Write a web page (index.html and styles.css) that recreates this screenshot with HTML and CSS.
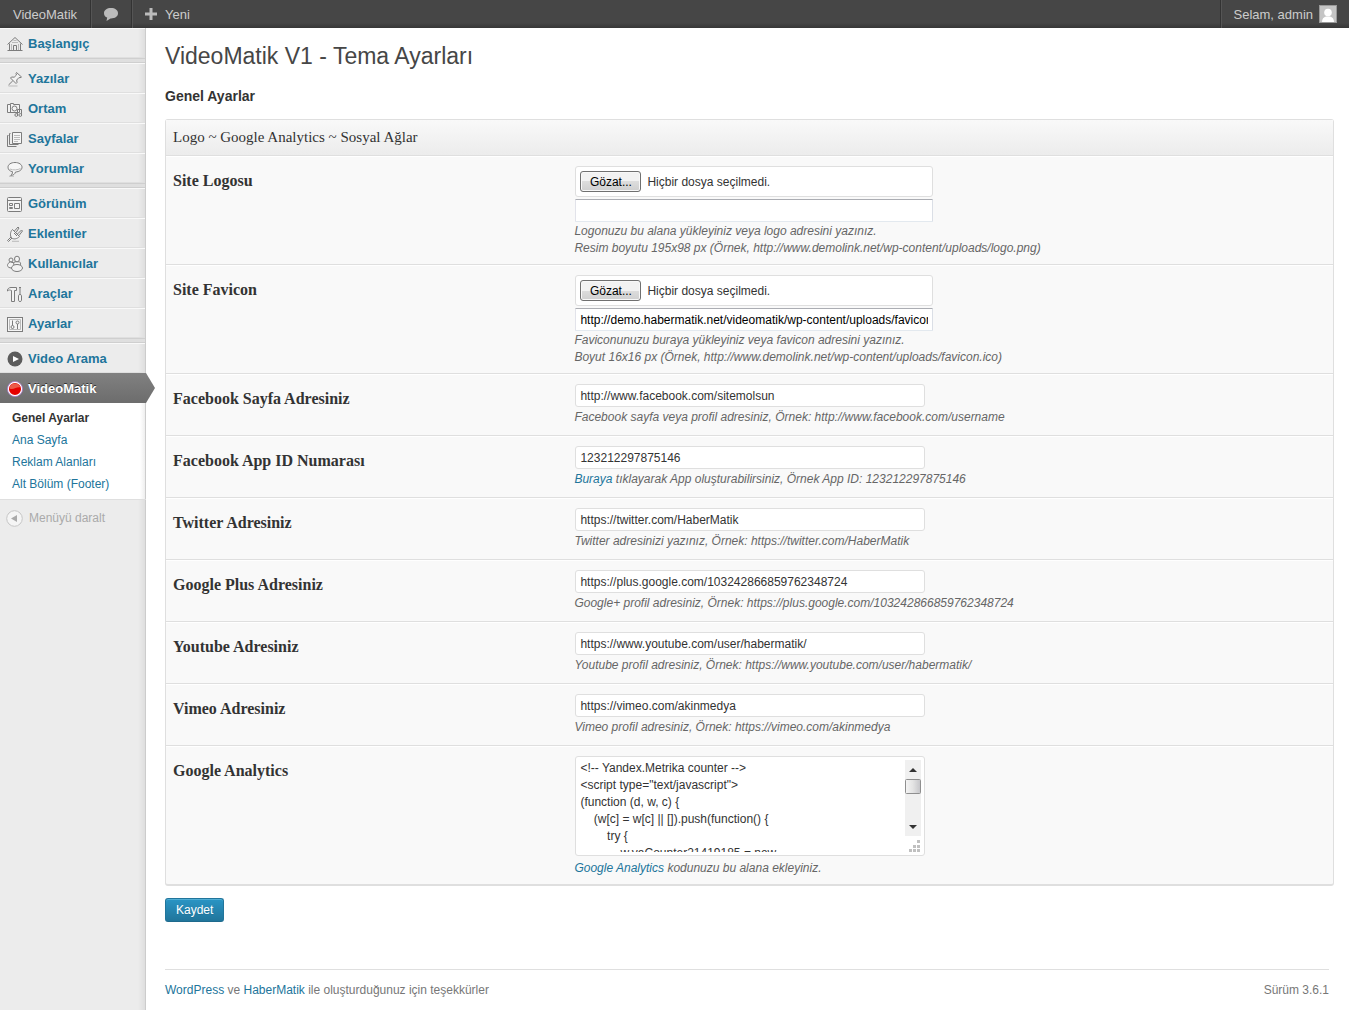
FILE: index.html
```
<!DOCTYPE html>
<html lang="tr">
<head>
  <meta charset="UTF-8">
  <title>VideoMatik V1 - Tema Ayarları</title>
  <link rel="stylesheet" href="styles.css">
</head>
<body>
  <div class="adminbar">
    <a class="bar-item" href="#">VideoMatik</a>
    <a class="bar-item bar-comments" href="#" aria-label="Yorumlar">
      <svg width="16" height="16" viewBox="0 0 16 16"><path d="M8 2C4 2 1 4 1 7.200c0 2 1.200 3.600 3.200 4.400L3.500 15l4-2.600H8c4 0 7-2 7-5.200S12 2 8 2z" fill="#bbb"/></svg>
    </a>
    <a class="bar-item bar-new" href="#">
      <svg width="12" height="12" viewBox="0 0 12 12"><path d="M4.500 0h3v4.500H12v3H7.500V12h-3V7.500H0v-3h4.500z" fill="#bbb"/></svg>
      Yeni
    </a>
    <a class="bar-item bar-user" href="#">
      Selam, admin
      <svg class="avatar" width="16" height="16" viewBox="0 0 16 16"><rect width="16" height="16" fill="#c5c5c5"/><circle cx="8" cy="6.500" r="3.800" fill="#fff"/><path d="M2 16c0-3 1.500-5 4-5.500h4c2.500.5 4 2.500 4 5.500z" fill="#fff"/></svg>
    </a>
  </div>

  <div class="page">
    <div class="sidebar">
      <ul class="menu">
        <li><a href="#">
          <svg class="icon" viewBox="0 0 16 16"><path class="soft" d="M4.500 8v6M11.500 8v6M5 6.500h6M6.500 4.500h3"/><path d="M.5 8.500l7.500-7 7.500 7M2.500 7.500v7M13.500 7.500v7M.5 14.500h15M6.500 14V9.500h3V14"/></svg>
          Başlangıç</a></li>
        <li class="separator"></li>
        <li><a href="#">
          <svg class="icon" viewBox="0 0 16 16"><path fill="#f3f3f3" d="M9.500 1.500l5 4.500-1.500.8-1-.3-2.300 2.500.3 2.500-1 1L3.500 7l1-1 2.700.2L9.500 4 9 2.500z"/><path d="M5.800 9.800L1.500 14"/><path class="soft" d="M1.500 15h9"/></svg>
          Yazılar</a></li>
        <li><a href="#">
          <svg class="icon" viewBox="0 0 16 16"><path fill="#f3f3f3" d="M.5 3.500h3v-1h3v1h6v8H.500zM3.500 3.500v8"/><circle cx="7.500" cy="7.500" r="2.500"/><path d="M10.500 13.500v-5h4v5"/><circle cx="9.300" cy="14" r="1.400" fill="#eee"/><circle cx="13.300" cy="14" r="1.400" fill="#eee"/></svg>
          Ortam</a></li>
        <li><a href="#">
          <svg class="icon" viewBox="0 0 16 16"><path d="M5.500 1.500h9v11h-9z" fill="#f6f6f6"/><path d="M3.500 2.500h-1v11h9M1.500 4.500h-1v11h9"/><path class="soft" d="M7 4.500h6M7 6.500h6M7 8.500h6M7 10.500h4"/></svg>
          Sayfalar</a></li>
        <li><a href="#">
          <svg class="icon" viewBox="0 0 16 16"><path fill="#f6f6f6" d="M8 1.500c-4 0-7 1.900-7 4.700 0 2.300 1.800 4 4.500 4.500 0 1.800-.5 3-2 4 2.700-.3 4.500-1.700 5-3.700 3.800-.2 6.500-2.100 6.500-4.800S12 1.500 8 1.500z"/><path class="soft" d="M3 8c3 1.500 8 1 10.500-.5M2 15.200h5"/></svg>
          Yorumlar</a></li>
        <li class="separator"></li>
        <li><a href="#">
          <svg class="icon" viewBox="0 0 16 16"><rect x=".5" y="1.500" width="14" height="14" rx="1" fill="#f3f3f3"/><path d="M1 4.500h13M7.500 7.500h5v5h-5zM2.500 7.500h3v2h-3zM2.500 11.500h3v1h-3z"/></svg>
          Görünüm</a></li>
        <li><a href="#">
          <svg class="icon" viewBox="0 0 16 16"><path fill="#f3f3f3" d="M5.500 3.500l7 7c-2.500 2.500-5.500 3-8 1.500-1.500-2.500-1.500-6 1-8.500z"/><path d="M7.500 5l3.500-4 1 1-3 4.500M10.500 8l4-4 1 1-3.500 4.500M4 11l-3.500 3.500 1 1L5 12M7 7l3 3"/><path class="soft" d="M5 15.300h7"/></svg>
          Eklentiler</a></li>
        <li><a href="#">
          <svg class="icon" viewBox="0 0 16 16"><g fill="#f3f3f3"><circle cx="4" cy="4" r="2"/><path d="M3.500 6C1.500 6.500.5 8 .5 9.500s2 2.500 4 2.500l3-2V7z"/><ellipse cx="10" cy="3" rx="2.500" ry="2.800"/><path d="M7.500 5.800c-1.500 2-1 3.200.500 3.700h4.500c1.500-.5 1.500-2.500 0-3.700z"/><ellipse cx="10" cy="12" rx="5.500" ry="3.500"/></g></svg>
          Kullanıcılar</a></li>
        <li><a href="#">
          <svg class="icon" viewBox="0 0 16 16"><path fill="#f3f3f3" d="M.5 4C1 2.500 2 1.500 4 1.500h5.500v3h-2v11h-3v-11C3 4 2 3.500.500 5zM11.500 9.500c0-1.300 3-1.300 3 0v5c0 1.300-3 1.300-3 0z"/><path d="M13 1v7.500M12 1.500h2"/></svg>
          Araçlar</a></li>
        <li><a href="#">
          <svg class="icon" viewBox="0 0 16 16"><rect x=".500" y="1.500" width="15" height="14" fill="#f6f6f6"/><path class="soft" d="M2.500 3.500h11v10h-11z"/><path d="M5.500 4.500v5M10.500 8v5"/><circle cx="5.500" cy="11" r="1.500"/><circle cx="10.500" cy="6.500" r="1.500"/></svg>
          Ayarlar</a></li>
        <li class="separator"></li>
        <li><a href="#">
          <svg class="icon" viewBox="0 0 16 16"><circle cx="8" cy="8" r="7.500" fill="#5c5c5c" stroke="none"/><path d="M6 5l6 3-6 3z" fill="#fff" stroke="none"/></svg>
          Video Arama</a></li>
        <li class="current"><a href="#">
          <svg class="icon" viewBox="0 0 16 16"><circle cx="8" cy="8" r="6.800" fill="#e60000" stroke="#fff" stroke-width="1.500"/><circle cx="8" cy="8" r="7.600" stroke="#a678c8" stroke-width=".8"/><path d="M2.500 7.500c0-3 2.500-5 5.500-5s5 2 5.500 4C10 5.500 6 9.500 2.500 7.500z" fill="#ea5a4a" stroke="none"/></svg>
          VideoMatik</a></li>
      </ul>
      <ul class="submenu">
        <li><a class="active" href="#">Genel Ayarlar</a></li>
        <li><a href="#">Ana Sayfa</a></li>
        <li><a href="#">Reklam Alanları</a></li>
        <li><a href="#">Alt Bölüm (Footer)</a></li>
      </ul>
      <button type="button" class="collapse">
        <svg width="17" height="17" viewBox="0 0 17 17"><circle cx="8.500" cy="8.500" r="7.800" fill="#f5f5f5" stroke="#c6c6c6"/><path d="M11 5v7L5 8.500z" fill="#aaa"/></svg>
        Menüyü daralt
      </button>
    </div>

    <div class="content">
      <h1>VideoMatik V1 - Tema Ayarları</h1>
      <h2>Genel Ayarlar</h2>

      <form onsubmit="event.preventDefault();">
        <table class="settings">
          <thead>
            <tr><th colspan="2">Logo ~ Google Analytics ~ Sosyal Ağlar</th></tr>
          </thead>
          <tbody>
            <tr class="upload-row">
              <th><label for="logo">Site Logosu</label></th>
              <td>
                <div class="file-box">
                  <button type="button" onclick="document.getElementById('logo-file').click()">Gözat...</button>
                  <label for="logo-file">Hiçbir dosya seçilmedi.</label>
                  <input type="file" id="logo-file" hidden>
                </div>
                <input class="path" type="text" id="logo" value="">
                <p>Logonuzu bu alana yükleyiniz veya logo adresini yazınız.<br>Resim boyutu 195x98 px (Örnek, http://www.demolink.net/wp-content/uploads/logo.png)</p>
              </td>
            </tr>
            <tr class="upload-row">
              <th><label for="favicon">Site Favicon</label></th>
              <td>
                <div class="file-box">
                  <button type="button" onclick="document.getElementById('favicon-file').click()">Gözat...</button>
                  <label for="favicon-file">Hiçbir dosya seçilmedi.</label>
                  <input type="file" id="favicon-file" hidden>
                </div>
                <input class="path" type="text" id="favicon" value="http://demo.habermatik.net/videomatik/wp-content/uploads/favicon.ico">
                <p>Faviconunuzu buraya yükleyiniz veya favicon adresini yazınız.<br>Boyut 16x16 px (Örnek, http://www.demolink.net/wp-content/uploads/favicon.ico)</p>
              </td>
            </tr>
            <tr>
              <th><label for="facebook">Facebook Sayfa Adresiniz</label></th>
              <td>
                <input class="text" type="text" id="facebook" value="http://www.facebook.com/sitemolsun">
                <p>Facebook sayfa veya profil adresiniz, Örnek: http://www.facebook.com/username</p>
              </td>
            </tr>
            <tr>
              <th><label for="appid">Facebook App ID Numarası</label></th>
              <td>
                <input class="text" type="text" id="appid" value="123212297875146">
                <p><a href="#">Buraya</a> tıklayarak App oluşturabilirsiniz, Örnek App ID: 123212297875146</p>
              </td>
            </tr>
            <tr>
              <th><label for="twitter">Twitter Adresiniz</label></th>
              <td>
                <input class="text" type="text" id="twitter" value="https://twitter.com/HaberMatik">
                <p>Twitter adresinizi yazınız, Örnek: https://twitter.com/HaberMatik</p>
              </td>
            </tr>
            <tr>
              <th><label for="gplus">Google Plus Adresiniz</label></th>
              <td>
                <input class="text" type="text" id="gplus" value="https://plus.google.com/103242866859762348724">
                <p>Google+ profil adresiniz, Örnek: https://plus.google.com/103242866859762348724</p>
              </td>
            </tr>
            <tr>
              <th><label for="youtube">Youtube Adresiniz</label></th>
              <td>
                <input class="text" type="text" id="youtube" value="https://www.youtube.com/user/habermatik/">
                <p>Youtube profil adresiniz, Örnek: https://www.youtube.com/user/habermatik/</p>
              </td>
            </tr>
            <tr>
              <th><label for="vimeo">Vimeo Adresiniz</label></th>
              <td>
                <input class="text" type="text" id="vimeo" value="https://vimeo.com/akinmedya">
                <p>Vimeo profil adresiniz, Örnek: https://vimeo.com/akinmedya</p>
              </td>
            </tr>
            <tr class="code-row">
              <th><label for="analytics">Google Analytics</label></th>
              <td>
                <div class="code-box">
                  <textarea id="analytics" spellcheck="false">&lt;!-- Yandex.Metrika counter --&gt;
&lt;script type="text/javascript"&gt;
(function (d, w, c) {
    (w[c] = w[c] || []).push(function() {
        try {
            w.yaCounter21419185 = new
Ya.Metrika({id:21419185,
                    webvisor:true,
                    clickmap:true,
                    trackLinks:true,
                    accurateTrackBounce:true});
        } catch(e) { }
    });
    var n = d.getElementsByTagName("script")[0],
        s = d.createElement("script"),
        f = function () { n.parentNode.insertBefore(s, n); };
    s.type = "text/javascript";
    s.async = true;
})(document, window, "yandex_metrika_callbacks");
&lt;/script&gt;</textarea>
                  <svg class="scroller" width="16" height="92" viewBox="0 0 16 92" aria-hidden="true">
                    <defs>
                      <linearGradient id="thumb"><stop offset="0" stop-color="#f5f5f5"/><stop offset=".5" stop-color="#e3e3e3"/><stop offset="1" stop-color="#c4c4c8"/></linearGradient>
                    </defs>
                    <rect width="16" height="76" fill="#f0f0f0"/>
                    <path d="M4 12h8L8 8zM4 65h8l-4 4z" fill="#333"/>
                    <rect x=".5" y="19.500" width="15" height="14" rx="1" fill="url(#thumb)" stroke="#8f8f8f"/>
                    <path d="M12 80h3v3h-3zM12 85h3v3h-3zM8 85h3v3H8zM12 89h3v3h-3zM8 89h3v3H8zM4 89h3v3H4z" fill="#c0c0c0"/>
                  </svg>
                </div>
                <p><a href="#">Google Analytics</a> kodunuzu bu alana ekleyiniz.</p>
              </td>
            </tr>
          </tbody>
        </table>
        <button type="submit" class="save">Kaydet</button>
      </form>

      <div class="footer">
        <span><a href="#">WordPress</a> ve <a href="#">HaberMatik</a> ile oluşturduğunuz için teşekkürler</span>
        <span>Sürüm 3.6.1</span>
      </div>
    </div>
  </div>
</body>
</html>
```
FILE: styles.css
```
* {
  box-sizing: border-box;
}

body {
  margin: 0;
  font-family: Arial, "Liberation Sans", sans-serif;
  font-size: 12px;
  color: #333;
  background-color: #fff;
}

a {
  color: #21759b;
  text-decoration: none;
}

.content a:hover,
.submenu a:hover {
  color: #d54e21;
}

/* Admin bar */
.adminbar {
  display: flex;
  height: 28px;
  background: linear-gradient(to top, #373737 0, #464646 5px);
}

.bar-item {
  display: flex;
  align-items: center;
  padding: 0 13px;
  font-size: 13px;
  color: #ccc;
  border-right: 1px solid #333;
  box-shadow: 1px 0 0 #555;
}

.bar-comments {
  padding: 0 12px;
}

.bar-new {
  gap: 8px;
  border-right: none;
  box-shadow: none;
}

.bar-user {
  gap: 6px;
  padding-right: 12px;
  margin-left: auto;
  border-left: 1px solid #333;
  border-right: none;
  box-shadow: inset 1px 0 0 #555;
}

.avatar {
  border: 1px solid #999;
  width: 18px;
  height: 18px;
}

/* Sidebar */
.page {
  display: flex;
  min-height: calc(100vh - 28px);
}

.sidebar {
  flex: 0 0 146px;
  background: linear-gradient(to left, #ccc 0, #ccc 1px, #dedede 1px, rgba(236, 236, 236, 0) 8px) #ececec;
}

.menu,
.submenu {
  margin: 0;
  padding: 0;
  list-style: none;
}

.menu a {
  display: flex;
  align-items: center;
  gap: 5px;
  height: 30px;
  padding: 1px 0 0 7px;
  margin-right: 1px;
  font-size: 13px;
  font-weight: bold;
  border-top: 1px solid #f9f9f9;
  border-bottom: 1px solid #dfdfdf;
}

.menu .separator {
  height: 5px;
  margin-right: 1px;
  background-color: #dfdfdf;
  border-top: 1px solid #cfcfcf;
  border-bottom: 1px solid #cfcfcf;
}

.icon {
  width: 16px;
  height: 16px;
  fill: none;
  stroke: #7c7c7c;
  overflow: visible;
}

.icon .soft {
  stroke: #bbb;
}

.menu .current {
  position: relative;
}

.menu .current a {
  margin-right: 0;
  color: #fff;
  text-shadow: 0 -1px 0 #333;
  background: linear-gradient(#808080, #6d6d6d);
  border-color: #808080 transparent #6d6d6d;
}

.menu .current::after {
  content: "";
  position: absolute;
  top: 0;
  left: 100%;
  width: 9px;
  height: 30px;
  background: linear-gradient(#808080, #6d6d6d);
  clip-path: polygon(0 0, 100% 50%, 0 100%);
}

.submenu {
  padding: 4px 0;
  background: linear-gradient(to left, #ccc 0, #ccc 1px, #eee 1px, #fff 6px);
  border-bottom: 1px solid #dfdfdf;
}

.submenu a {
  display: block;
  padding-left: 12px;
  line-height: 22px;
}

.submenu .active {
  color: #333;
  font-weight: bold;
}

.collapse {
  display: flex;
  align-items: center;
  gap: 6px;
  height: 36px;
  padding: 0 6px;
  font: 12px Arial, "Liberation Sans", sans-serif;
  color: #aaa;
  background: none;
  border: none;
  cursor: pointer;
}

/* Content */
.content {
  display: flex;
  flex-direction: column;
  flex: 1;
  min-width: 0;
  padding: 0 15px 0 19px;
}

h1 {
  margin: 0;
  padding-top: 13px;
  font-size: 23px;
  font-weight: normal;
  line-height: 30px;
  color: #464646;
}

h2 {
  margin: 16px 0 14px;
  font-size: 14px;
  line-height: 18px;
}

/* Settings table */
.settings {
  width: 100%;
  background-color: #f9f9f9;
  border: 1px solid #dfdfdf;
  border-bottom-width: 2px;
  border-radius: 3px;
  border-spacing: 0;
}

.settings th {
  width: 35%;
  padding: 16px 7px 0;
  font-family: Georgia, "Liberation Serif", serif;
  font-size: 16px;
  line-height: 18px;
  text-align: left;
  vertical-align: top;
}

.settings thead th {
  height: 35px;
  padding: 0 7px 2px;
  font-size: 15px;
  font-weight: normal;
  vertical-align: middle;
  background: linear-gradient(#f9f9f9, #ececec);
}

.settings td {
  padding: 10px 0 9px;
}

.settings tbody th,
.settings tbody td {
  border-top: 1px solid #dfdfdf;
  box-shadow: inset 0 1px 0 #fff;
}

.settings .upload-row td,
.settings .code-row td {
  padding-bottom: 7px;
}

.settings p {
  margin: 2px 0 0;
  font-style: italic;
  line-height: 17px;
  color: #666;
}

.settings .upload-row p {
  margin-top: 1px;
}

.text,
.path {
  display: block;
  width: 350px;
  height: 23px;
  margin: 0 0 0 1px;
  padding: 0 4px;
  font: 12px Arial, "Liberation Sans", sans-serif;
  color: #333;
  background-color: #fff;
  border: 1px solid #dfdfdf;
  border-radius: 3px;
}

.path {
  width: 358px;
  color: #000;
  border-color: #abadb3 #dbdfe6 #e3e9ef #e2e3ea;
  border-radius: 1px;
}

.file-box {
  display: flex;
  align-items: center;
  gap: 6px;
  width: 358px;
  height: 31px;
  margin: 0 0 2px 1px;
  padding: 0 4px;
  background-color: #fff;
  border: 1px solid #dfdfdf;
  border-radius: 3px;
}

.file-box button {
  width: 61px;
  height: 21px;
  padding: 0;
  font: 12px Arial, "Liberation Sans", sans-serif;
  color: #000;
  background: linear-gradient(#f2f2f2 50%, #ddd 50%, #cfcfcf);
  border: 1px solid #707070;
  border-radius: 3px;
  box-shadow: inset 0 0 0 1px #f8f8f8;
}

.code-box {
  position: relative;
  width: 350px;
  height: 100px;
  margin: 0 0 4px 1px;
  padding: 3px;
  background-color: #fff;
  border: 1px solid #dfdfdf;
  border-radius: 3px;
}

.code-box textarea {
  display: block;
  width: 100%;
  height: 100%;
  padding: 0 17px 0 1px;
  font: 12px/17px Arial, "Liberation Sans", sans-serif;
  color: #333;
  border: none;
  outline: none;
  resize: none;
  overflow-x: hidden;
  overflow-y: scroll;
  scrollbar-width: none;
}

/* scrollbar and resize grip over the textarea */
.scroller {
  position: absolute;
  top: 3px;
  right: 3px;
  pointer-events: none;
}

.settings .code-row p {
  margin-top: 0;
}

/* Buttons and footer */
.save {
  height: 24px;
  margin-top: 12px;
  padding: 0 10px;
  font: 12px Arial, "Liberation Sans", sans-serif;
  color: #fff;
  text-shadow: 0 1px 0 rgba(0, 0, 0, 0.1);
  background: linear-gradient(#2a95c5, #21759b);
  border: 1px solid #21759b;
  border-bottom-color: #1e6a8d;
  border-radius: 3px;
  box-shadow: inset 0 1px 0 rgba(120, 200, 230, 0.5);
}

.footer {
  display: flex;
  justify-content: space-between;
  margin: auto 5px 0 0;
  padding: 10px 0;
  line-height: 20px;
  color: #777;
  border-top: 1px solid #dfdfdf;
}
```
